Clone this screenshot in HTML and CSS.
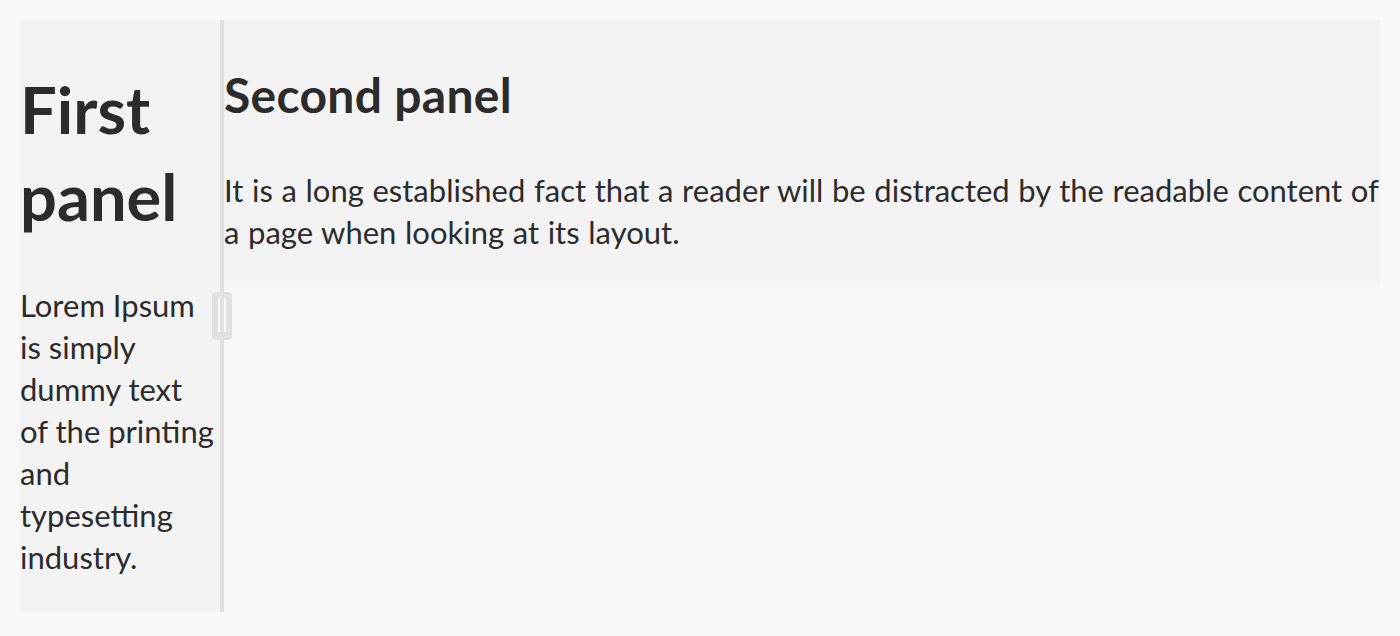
FILE: index.html
```html
<!DOCTYPE html>
<html lang="en">
<head>
<meta charset="utf-8">
<title>Split view</title>
<link rel="stylesheet" href="styles.css">
</head>
<body>
<div class="split">
  <section class="panel panel-first">
    <h1 class="title-xl">First panel</h1>
    <p class="body-text body-narrow">Lorem Ipsum is simply dummy text of the printing and typesetting industry.</p>
  </section>
  <div class="splitter"><span class="gripper"></span></div>
  <section class="panel panel-second">
    <h2 class="title-l">Second panel</h2>
    <p class="body-text body-last">It is a long established fact that a reader will be distracted by the readable content of a page when looking at its layout.</p>
  </section>
</div>
</body>
</html>
```
FILE: styles.css
```css
html, body {
  margin: 0;
  padding: 0;
}
body {
  background: #f8f8f8;
  color: #2c2c2c;
  font-family: "Lato", "Open Sans", sans-serif;
  padding: 20px;
  height: 636px;
  box-sizing: border-box;
}
.split {
  display: flex;
  height: 592px;
}
.panel {
  background: #f3f3f3;
}
.panel-first {
  width: 200px;
  flex: 0 0 200px;
  align-self: stretch;
}
.panel-second {
  flex: 1 1 auto;
  align-self: flex-start;
}
.splitter {
  flex: 0 0 4px;
  background: #e1e1e1;
  position: relative;
}
.gripper {
  position: absolute;
  left: -8px;
  top: 272px;
  width: 20px;
  height: 48px;
  border-radius: 4px;
  background: #e1e1e1;
}
.gripper::before,
.gripper::after {
  content: "";
  position: absolute;
  top: 6px;
  width: 2px;
  height: 34px;
  background: #f8f8f8;
}
.gripper::before { left: 6px; }
.gripper::after { left: 12px; }
.title-xl {
  font-size: 65px;
  font-weight: 700;
  line-height: 87px;
  margin: 46px 0 44px;
}
.title-l {
  font-size: 48px;
  font-weight: 700;
  line-height: 60px;
  letter-spacing: 0.3px;
  margin: 45px 0 44px;
}
.body-text {
  font-size: 31px;
  line-height: 42px;
  margin: 0;
}
.body-narrow {
  max-width: 196px;
}
.body-last {
  word-spacing: 0.7px;
  margin-bottom: 33px;
}
```
